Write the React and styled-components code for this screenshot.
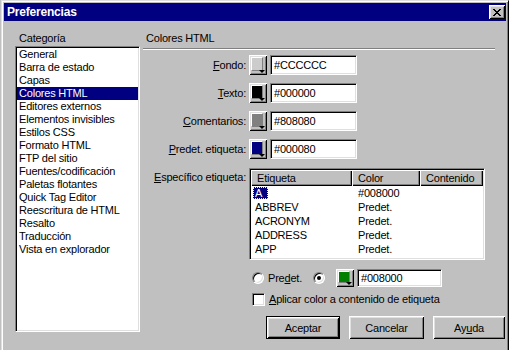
import React from "react";
import styled, { createGlobalStyle } from "styled-components";

const GlobalStyle = createGlobalStyle`
  html, body { margin: 0; padding: 0; background: #c0c0c0; overflow: hidden; }
  body { font-family: "Liberation Sans", Arial, sans-serif; font-size: 11px; letter-spacing: -0.2px; color: #000; }
  * { box-sizing: border-box; }
`;

const Window = styled.div`
  margin-left: 1px;
  width: 508px;
  height: 362px;
  background: #c0c0c0;
  border: 1px solid;
  border-color: #dfdfdf #000 #000 #dfdfdf;
  box-shadow: inset 1px 1px #fff, inset -1px -1px #808080;
  padding: 2px;
  display: flex;
  flex-direction: column;
`;

const TitleBar = styled.div`
  height: 18px;
  background: #000080;
  color: #fff;
  font-weight: bold;
  font-size: 12px;
  letter-spacing: -0.2px;
  display: flex;
  align-items: center;
  justify-content: space-between;
  padding: 0 1px 0 3px;
`;

const CloseButton = styled.div`
  width: 16px;
  height: 14px;
  background: #c0c0c0;
  box-shadow: inset 1px 1px #fff, inset -1px -1px #000, inset 2px 2px #dfdfdf, inset -2px -2px #808080;
  display: flex;
  align-items: center;
  justify-content: center;
`;

const Body = styled.div`
  display: flex;
  gap: 3px;
  padding: 10px 0 0 11px;
`;

const LeftColumn = styled.div`
  width: 125px;
  display: flex;
  flex-direction: column;
`;

const SectionTitle = styled.div`
  height: 14px;
  line-height: 14px;
  padding-left: ${(p) => p.$indent || 0}px;
`;

const sunken = `
  border: 1px solid;
  border-color: #808080 #fff #fff #808080;
  box-shadow: inset 1px 1px #000, inset -1px -1px #dfdfdf;
  background: #fff;
`;

const raised = `
  background: #c0c0c0;
  box-shadow: inset 1px 1px #fff, inset -1px -1px #000, inset 2px 2px #dfdfdf, inset -2px -2px #808080;
`;

const ListBox = styled.div`
  ${sunken}
  margin-top: 1px;
  height: 286px;
  padding: 1px;
  display: flex;
  flex-direction: column;
`;

const ListItem = styled.div`
  height: 13px;
  line-height: 13px;
  padding-left: 2px;
  white-space: nowrap;
  background: ${(p) => (p.$selected ? "#000080" : "transparent")};
  color: ${(p) => (p.$selected ? "#fff" : "#000")};
`;

const RightColumn = styled.div`
  flex: 1;
  display: flex;
  flex-direction: column;
  padding-right: 1px;
`;

const Etched = styled.div`
  height: 2px;
  margin: 3px 10px 0 0;
  border-top: 1px solid #808080;
  border-bottom: 1px solid #fff;
`;

const Form = styled.div`
  display: flex;
  flex-direction: column;
  gap: 8px;
  margin-top: 5px;
`;

const FormRow = styled.div`
  display: grid;
  grid-template-columns: 103px auto;
  column-gap: 3px;
  align-items: ${(p) => (p.$top ? "start" : "center")};
  margin-top: ${(p) => p.$mt || 0}px;
`;

const Label = styled.div`
  text-align: right;
  white-space: nowrap;
  line-height: 14px;
  padding-top: ${(p) => p.$pt || 0}px;
`;

const Controls = styled.div`
  display: flex;
  align-items: center;
  gap: 3px;
`;

const SwatchButton = styled.div`
  position: relative;
  width: 18px;
  height: ${(p) => p.$h || 20}px;
  ${raised}
  padding: 2px 0 0 2px;
  flex-shrink: 0;
`;

const SwatchColor = styled.div`
  width: 12px;
  height: ${(p) => p.$h || 14}px;
  background: ${(p) => p.$color};
  border: 1px solid;
  border-color: #fff #808080 #808080 #fff;
`;

const SwatchArrow = styled.div`
  position: absolute;
  right: 2px;
  bottom: 2px;
  width: 0;
  height: 0;
  border-left: 3px solid transparent;
  border-right: 3px solid transparent;
  border-top: 3px solid #000;
`;

const Field = styled.div`
  ${sunken}
  width: ${(p) => p.$w || 87}px;
  height: ${(p) => p.$h || 20}px;
  margin-left: ${(p) => p.$ml || 0}px;
  padding-left: 3px;
  display: flex;
  align-items: center;
  white-space: nowrap;
  flex-shrink: 0;
`;

const Table = styled.div`
  ${sunken}
  width: 236px;
  height: 92px;
  padding: 1px;
  overflow: hidden;
  display: flex;
  flex-direction: column;
`;

const TableRow = styled.div`
  display: grid;
  grid-template-columns: 101px 68px 1fr;
  flex-shrink: 0;
`;

const HeaderCell = styled.div`
  height: 16px;
  line-height: 16px;
  padding-left: 6px;
  ${raised}
  box-shadow: inset 1px 1px #fff, inset -1px -1px #000, inset -2px -2px #808080;
`;

const Cell = styled.div`
  height: 14px;
  line-height: 14px;
  padding-left: ${(p) => p.$pl || 6}px;
  white-space: nowrap;
`;

const TagName = styled.span`
  display: inline-block;
  height: 12px;
  line-height: 12px;
  padding-left: 2px;
  ${(p) =>
    p.$selected
      ? `width: 15px; background: #000080; color: #fff; outline: 1px dotted #ffff80; outline-offset: -1px;`
      : ""}
`;

const OptionRow = styled.div`
  display: flex;
  align-items: center;
  height: 18px;
  margin-top: ${(p) => p.$mt || 0}px;
  padding-left: 109px;
`;

const Radio = styled.span`
  position: relative;
  width: 12px;
  height: 12px;
  border-radius: 50%;
  border: 1px solid;
  border-color: #808080 #fff #fff #808080;
  box-shadow: inset 1px 1px #000, inset -1px -1px #dfdfdf;
  background: #fff;
  margin-right: ${(p) => p.$mr || 0}px;
  flex-shrink: 0;
  &::after {
    content: "";
    display: ${(p) => (p.$checked ? "block" : "none")};
    position: absolute;
    left: 3px;
    top: 3px;
    width: 4px;
    height: 4px;
    border-radius: 50%;
    background: #000;
  }
`;

const OptionText = styled.span`
  white-space: nowrap;
  ${(p) => (p.$w ? `width: ${p.$w}px; flex-shrink: 0;` : "")}
`;

const Checkbox = styled.span`
  width: 13px;
  height: 13px;
  ${sunken}
  margin-right: 4px;
  flex-shrink: 0;
`;

const Buttons = styled.div`
  display: flex;
  justify-content: flex-end;
  gap: 9px;
  margin-top: 8px;
`;

const Button = styled.div`
  width: ${(p) => p.$w}px;
  height: 23px;
  display: flex;
  align-items: center;
  justify-content: center;
  ${raised}
  ${(p) => (p.$default ? `border: 1px solid #000;` : "")}
`;

const categories = [
  "General",
  "Barra de estado",
  "Capas",
  "Colores HTML",
  "Editores externos",
  "Elementos invisibles",
  "Estilos CSS",
  "Formato HTML",
  "FTP del sitio",
  "Fuentes/codificación",
  "Paletas flotantes",
  "Quick Tag Editor",
  "Reescritura de HTML",
  "Resalto",
  "Traducción",
  "Vista en explorador",
];

const colorRows = [
  { key: "F", rest: "ondo:", color: "#cccccc", value: "#CCCCCC" },
  { key: "T", rest: "exto:", color: "#000000", value: "#000000" },
  { key: "C", rest: "omentarios:", color: "#808080", value: "#808080" },
  { key: "P", rest: "redet. etiqueta:", color: "#000080", value: "#000080" },
];

const tags = [
  ["A", "#008000"],
  ["ABBREV", "Predet."],
  ["ACRONYM", "Predet."],
  ["ADDRESS", "Predet."],
  ["APP", "Predet."],
  ["APPLET", "Predet."],
];

function Swatch({ color, h }) {
  return (
    <SwatchButton $h={h}>
      <SwatchColor $color={color} $h={h ? h - 6 : 14} />
      <SwatchArrow />
    </SwatchButton>
  );
}

export default function App() {
  return (
    <>
      <GlobalStyle />
      <Window>
        <TitleBar>
          <span>Preferencias</span>
          <CloseButton>
            <svg width="8" height="7" viewBox="0 0 8 7">
              <path d="M0 0h2v1h1v1h2V1h1V0h2v1H7v1H6v1H5v1h1v1h1v1h1v1H6V6H5V5H3v1H2v1H0V6h1V5h1V4h1V3H2V2H1V1H0z" fill="#000" />
            </svg>
          </CloseButton>
        </TitleBar>
        <Body>
          <LeftColumn>
            <SectionTitle $indent={4}>Categoría</SectionTitle>
            <ListBox>
              {categories.map((c) => (
                <ListItem key={c} $selected={c === "Colores HTML"}>
                  {c}
                </ListItem>
              ))}
            </ListBox>
          </LeftColumn>
          <RightColumn>
            <SectionTitle $indent={3}>Colores HTML</SectionTitle>
            <Etched />
            <Form>
              {colorRows.map((r) => (
                <FormRow key={r.key}>
                  <Label>
                    <u>{r.key}</u>
                    {r.rest}
                  </Label>
                  <Controls>
                    <Swatch color={r.color} />
                    <Field>{r.value}</Field>
                  </Controls>
                </FormRow>
              ))}
              <FormRow $top $mt={1}>
                <Label $pt={2}>
                  <u>E</u>specífico etiqueta:
                </Label>
                <Table>
                  <TableRow>
                    <HeaderCell>Etiqueta</HeaderCell>
                    <HeaderCell>Color</HeaderCell>
                    <HeaderCell>Contenido</HeaderCell>
                  </TableRow>
                  {tags.map(([t, c], i) => (
                    <TableRow key={t}>
                      <Cell $pl={2}>
                        <TagName $selected={i === 0}>{t}</TagName>
                      </Cell>
                      <Cell>{c}</Cell>
                      <Cell />
                    </TableRow>
                  ))}
                </Table>
              </FormRow>
            </Form>
            <OptionRow $mt={9}>
              <Radio $mr={4} />
              <OptionText $w={45}>
                Pre<u>d</u>et.
              </OptionText>
              <Radio $checked $mr={11} />
              <Swatch color="#008000" h={18} />
              <Field $w={85} $h={18} $ml={3}>#008000</Field>
            </OptionRow>
            <OptionRow $mt={3}>
              <Checkbox />
              <OptionText>
                <u>A</u>plicar color a contenido de etiqueta
              </OptionText>
            </OptionRow>
            <Buttons>
              <Button $w={74} $default>Aceptar</Button>
              <Button $w={75}>Cancelar</Button>
              <Button $w={72}>
                <span>
                  Ay<u>u</u>da
                </span>
              </Button>
            </Buttons>
          </RightColumn>
        </Body>
      </Window>
    </>
  );
}
